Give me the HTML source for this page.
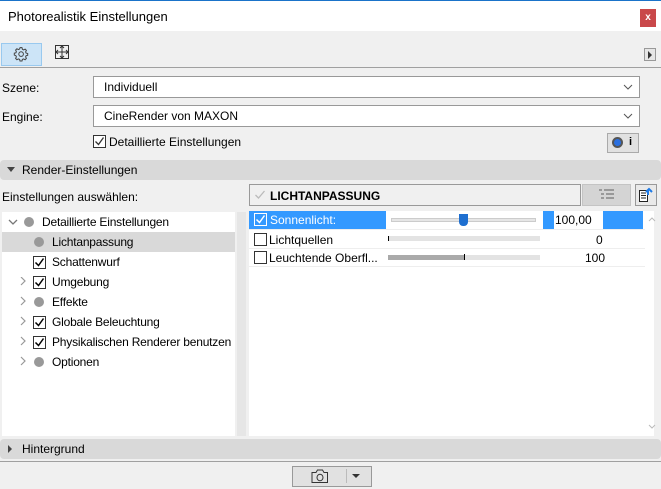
<!DOCTYPE html>
<html><head><meta charset="utf-8"><style>
*{box-sizing:border-box;margin:0;padding:0}
body{width:661px;height:489px;overflow:hidden;background:#f0f0f0;font-family:"Liberation Sans",sans-serif;font-size:12px;color:#000;position:relative}
.a{position:absolute}
.dd{position:absolute;left:93px;width:547px;height:22px;background:#fff;border:1px solid #999;padding:3px 0 0 10px;font-size:12px}
.dd svg{position:absolute;right:6px;top:7px}
.cb{position:absolute;width:13px;height:13px;border:1px solid #333;background:#fff}
.hdr{position:absolute;left:0;width:661px;height:20px;background:#d9d9d9;border-radius:4px;padding:3px 0 0 22px}
.row{position:absolute;height:20px;line-height:20px;letter-spacing:-0.2px}
.dot{position:absolute;width:10px;height:10px;border-radius:5px;background:#999}
</style></head><body>
<div class="a" style="left:0;top:0;width:661px;height:1px;background:#1a73c9"></div>
<div class="a" style="left:0;top:1px;width:661px;height:30px;background:#fff"></div>
<div class="a" style="left:8px;top:9px;font-size:13px">Photorealistik Einstellungen</div>
<div class="a" style="left:640px;top:9px;width:16px;height:18px;background:#c9484a;color:#fff;font-size:10px;text-align:center;line-height:18px;font-weight:bold">x</div>
<div class="a" style="left:1px;top:43px;width:41px;height:23px;background:#cce4f7;border:1px solid #99c9ef"></div>
<svg class="a" style="left:13px;top:46px" width="16" height="16" viewBox="0 0 16 16"><path d="M8 1.5l1 .2.4 1.6 1.2.6 1.5-.8 1.3 1.3-.8 1.5.5 1.2 1.6.4v1.8l-1.6.4-.5 1.2.8 1.5-1.3 1.3-1.5-.8-1.2.5-.4 1.6H7l-.4-1.6-1.2-.5-1.5.8-1.3-1.3.8-1.5-.5-1.2L1.3 9V7.2l1.6-.4.5-1.2-.8-1.5 1.3-1.3 1.5.8 1.2-.6L7 1.7z" fill="none" stroke="#444" stroke-width="1"/><circle cx="8.1" cy="8.1" r="2.3" fill="none" stroke="#444"/></svg>
<svg class="a" style="left:55px;top:45px" width="15" height="15" viewBox="0 0 15 15"><rect x=".5" y=".5" width="13" height="13" fill="none" stroke="#333"/><path d="M7 1v12M1 7h12M5 3l2-2 2 2M5 11l2 2 2-2M3 5L1 7l2 2M11 5l2 2-2 2" fill="none" stroke="#333"/></svg>
<div class="a" style="left:644px;top:48px;width:12px;height:13px;background:#e6e6e6;border:1px solid #999"></div>
<svg class="a" style="left:647px;top:51px" width="6" height="8"><path d="M1 0l4 4-4 4z" fill="#333"/></svg>
<div class="a" style="left:0;top:67px;width:661px;height:1px;background:#a0a0a0"></div>
<div class="a" style="left:2px;top:81px">Szene:</div>
<div class="dd" style="top:76px">Individuell<svg width="10" height="6"><path d="M1 1l4 4 4-4" fill="none" stroke="#555"/></svg></div>
<div class="a" style="left:2px;top:110px">Engine:</div>
<div class="dd" style="top:105px">CineRender von MAXON<svg width="10" height="6"><path d="M1 1l4 4 4-4" fill="none" stroke="#555"/></svg></div>
<div class="cb" style="left:93px;top:135px"><svg width="11" height="11" style="position:absolute;left:0;top:0"><path d="M1.5 5.5l3 3 5-7" fill="none" stroke="#333" stroke-width="1.3"/></svg></div>
<div class="a" style="left:109px;top:135px">Detaillierte Einstellungen</div>
<div class="a" style="left:607px;top:133px;width:32px;height:20px;background:#e1e1e1;border:1px solid #aaa"></div>
<div class="a" style="left:612px;top:137px;width:11px;height:11px;border-radius:6px;background:#2a6fe0;border:2px solid #555"></div>
<div class="a" style="left:629px;top:136px;font-weight:bold;font-size:11px">i</div>
<div class="hdr" style="top:160px">Render-Einstellungen</div>
<svg class="a" style="left:7px;top:167px" width="8" height="6"><path d="M0 0h8l-4 5z" fill="#444"/></svg>
<div class="a" style="left:2px;top:190px">Einstellungen auswählen:</div>
<div class="a" style="left:2px;top:212px;width:233px;height:224px;background:#fff"></div>
<div class="a" style="left:2px;top:232px;width:233px;height:20px;background:#d9d9d9"></div>
<div class="a" style="left:237px;top:212px;width:9px;height:224px;background:#e6e6e6"></div>
<svg class="a" style="left:8px;top:219px" width="10" height="6"><path d="M1 1l4 4 4-4" fill="none" stroke="#777" stroke-width="1.3"/></svg>
<div class="dot" style="left:24px;top:217px"></div><div class="row" style="left:42px;top:212px">Detaillierte Einstellungen</div>
<div class="dot" style="left:34px;top:237px"></div><div class="row" style="left:52px;top:232px">Lichtanpassung</div>
<div class="cb" style="left:33px;top:256px"><svg width="11" height="11" style="position:absolute"><path d="M1.5 5.5l3 3 5-7" fill="none" stroke="#000" stroke-width="1.5"/></svg></div><div class="row" style="left:52px;top:252px">Schattenwurf</div>
<div class="cb" style="left:33px;top:276px"><svg width="11" height="11" style="position:absolute"><path d="M1.5 5.5l3 3 5-7" fill="none" stroke="#000" stroke-width="1.5"/></svg></div><div class="row" style="left:52px;top:272px">Umgebung</div>
<div class="dot" style="left:34px;top:297px"></div><div class="row" style="left:52px;top:292px">Effekte</div>
<div class="cb" style="left:33px;top:316px"><svg width="11" height="11" style="position:absolute"><path d="M1.5 5.5l3 3 5-7" fill="none" stroke="#000" stroke-width="1.5"/></svg></div><div class="row" style="left:52px;top:312px">Globale Beleuchtung</div>
<div class="cb" style="left:33px;top:336px"><svg width="11" height="11" style="position:absolute"><path d="M1.5 5.5l3 3 5-7" fill="none" stroke="#000" stroke-width="1.5"/></svg></div><div class="row" style="left:52px;top:332px">Physikalischen Renderer benutzen</div>
<div class="dot" style="left:34px;top:357px"></div><div class="row" style="left:52px;top:352px">Optionen</div>
<svg class="a" style="left:20px;top:277px" width="6" height="90"><path d="M1 0l4 4-4 4M1 20l4 4-4 4M1 40l4 4-4 4M1 60l4 4-4 4M1 80l4 4-4 4" fill="none" stroke="#999" stroke-width="1.2"/></svg>
<div class="a" style="left:249px;top:184px;width:332px;height:22px;background:#f0f0f0;border:1px solid #999"></div>
<svg class="a" style="left:254px;top:189px" width="12" height="12"><path d="M1.5 6l3 3 6-7" fill="none" stroke="#bbb" stroke-width="1.3"/></svg>
<div class="a" style="left:270px;top:189px;font-weight:bold">LICHTANPASSUNG</div>
<div class="a" style="left:582px;top:184px;width:49px;height:22px;background:#d4d4d4;border:1px solid #c4c4c4"></div>
<svg class="a" style="left:599px;top:189px" width="16" height="12"><path d="M0 1h3M5 1h10M2 5h3M7 5h8M2 9h3M7 9h8" stroke="#999" stroke-width="2"/></svg>
<div class="a" style="left:635px;top:184px;width:22px;height:22px;background:#e9e9e9;border:1px solid #999"></div>
<svg class="a" style="left:638px;top:187px" width="16" height="16"><path d="M1.5 3.5h8v11h-8z" fill="#fff" stroke="#222"/><path d="M3 6h5M3 8.5h5M3 11h5" stroke="#222"/><path d="M10 8V3M8 5l3-3 3 3" fill="none" stroke="#1e7ae6" stroke-width="2"/></svg>
<div class="a" style="left:249px;top:211px;width:405px;height:225px;background:#fff"></div>
<div class="a" style="left:249px;top:211px;width:137px;height:18px;background:#3399ff"></div>
<div class="cb" style="left:254px;top:213px;border-color:#fff;background:#3399ff"><svg width="11" height="11" style="position:absolute"><path d="M1.5 5.5l3 3 5-7" fill="none" stroke="#fff" stroke-width="1.5"/></svg></div>
<div class="a" style="left:270px;top:213px;color:#fff">Sonnenlicht:</div>
<div class="a" style="left:391px;top:218px;width:145px;height:4px;background:#e6e6e6;border:1px solid #ccc"></div>
<div class="a" style="left:459px;top:214px;width:9px;height:12px;background:#1e6fd0;border-radius:0 0 4px 4px"></div>
<div class="a" style="left:543px;top:211px;width:100px;height:18px;background:#3399ff"></div>
<div class="a" style="left:554px;top:211px;width:49px;height:18px;background:#fff;padding:2px 0 0 1px">100,00</div>
<div class="a" style="left:249px;top:229px;width:396px;height:1px;background:#eee"></div>
<div class="cb" style="left:254px;top:233px"></div><div class="a" style="left:269px;top:233px">Lichtquellen</div>
<div class="a" style="left:388px;top:236px;width:152px;height:5px;background:#e3e3e3"></div><div class="a" style="left:388px;top:236px;width:1px;height:5px;background:#000"></div>
<div class="a" style="left:596px;top:233px">0</div>
<div class="a" style="left:249px;top:248px;width:396px;height:1px;background:#eee"></div>
<div class="cb" style="left:254px;top:251px"></div><div class="a" style="left:269px;top:251px">Leuchtende Oberfl...</div>
<div class="a" style="left:388px;top:255px;width:152px;height:5px;background:#e3e3e3"></div><div class="a" style="left:388px;top:255px;width:76px;height:5px;background:#aaa"></div><div class="a" style="left:464px;top:254px;width:1px;height:6px;background:#000"></div>
<div class="a" style="left:585px;top:251px">100</div>
<div class="a" style="left:249px;top:266px;width:396px;height:1px;background:#eee"></div>
<svg class="a" style="left:648px;top:217px" width="8" height="5"><path d="M1 4l3-3 3 3" fill="none" stroke="#bbb"/></svg>
<svg class="a" style="left:648px;top:424px" width="8" height="5"><path d="M1 1l3 3 3-3" fill="none" stroke="#bbb"/></svg>
<div class="hdr" style="top:439px">Hintergrund</div>
<svg class="a" style="left:8px;top:445px" width="5" height="8"><path d="M0 0l4 4-4 4z" fill="#444"/></svg>
<div class="a" style="left:0;top:461px;width:661px;height:1px;background:#a0a0a0"></div>
<div class="a" style="left:292px;top:466px;width:80px;height:21px;background:#e1e1e1;border:1px solid #999"></div>
<svg class="a" style="left:311px;top:468px" width="18" height="16"><path d="M1 4.5h4l1.5-2.5h5L13 4.5h3.5v10H1z" fill="none" stroke="#333"/><ellipse cx="9" cy="9.5" rx="3" ry="3.3" fill="none" stroke="#333"/></svg>
<div class="a" style="left:346px;top:469px;width:1px;height:14px;background:#bbb"></div>
<svg class="a" style="left:352px;top:474px" width="8" height="5"><path d="M0 0h8l-4 4z" fill="#333"/></svg>
</body></html>
